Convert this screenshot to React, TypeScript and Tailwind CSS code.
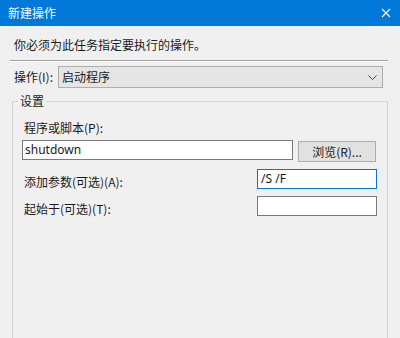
import React from 'react'

const font = { fontFamily: '"Noto Sans CJK SC", "Noto Sans", sans-serif' }

function CloseIcon() {
  return (
    <svg width="10" height="10" viewBox="0 0 10 10" className="block">
      <path d="M1 1 L9 9 M9 1 L1 9" stroke="#ffffff" strokeWidth="1.1" fill="none" />
    </svg>
  )
}

function Chevron() {
  return (
    <svg width="9" height="5" viewBox="0 0 9 5" className="block">
      <path d="M0.5 0.5 L4.5 4.5 L8.5 0.5" stroke="#444444" strokeWidth="1" fill="none" />
    </svg>
  )
}

export default function App() {
  return (
    <div
      className="w-[400px] h-[338px] overflow-hidden bg-[#f0f0f0] text-[12px] leading-[16px] text-[#1a1a1a]"
      style={font}
    >
      {/* Title bar */}
      <div className="flex h-[26px] items-center justify-between bg-[#0078d7] pl-[8px] pr-[9px] text-white">
        <span>新建操作</span>
        <CloseIcon />
      </div>

      <div className="px-[10px]">
        <p className="ml-[4px] mt-[11px]">你必须为此任务指定要执行的操作。</p>

        {/* Separator */}
        <div className="mt-[7px] w-[378px] border-t border-b border-t-[#a0a0a0] border-b-white" />

        {/* Action combo */}
        <div className="mt-[4px] flex items-center">
          <span className="ml-[4px] w-[44px]">操作(I):</span>
          <div className="flex h-[22px] w-[325px] items-center justify-between border border-[#adadad] bg-[#e5e5e5] pl-[3px] pr-[5px]">
            <span>启动程序</span>
            <Chevron />
          </div>
        </div>

        {/* Settings group */}
        <fieldset className="ml-[2px] mt-[5px] h-[260px] w-[376px] border border-[#d5d5d5] pl-[9px] pt-[11px]">
          <legend className="-ml-[4px] px-[2px]">设置</legend>
          <div className="ml-[2px]">程序或脚本(P):</div>
          <div className="mt-[4px] flex items-start gap-[5px]">
            <div className="flex h-[20px] w-[271px] items-center border border-[#7a7a7a] bg-white pl-[2px]">
              <span style={{ fontFamily: '"Noto Sans", sans-serif' }}>shutdown</span>
            </div>
            <button className="mt-[1px] h-[21px] w-[78px] border border-[#adadad] bg-[#e1e1e1] text-center">
              浏览(R)...
            </button>
          </div>

          <div className="mt-[7px] flex w-[355px] items-start justify-between">
            <span className="ml-[2px] pt-[5px]">添加参数(可选)(A):</span>
            <div className="flex h-[20px] w-[120px] items-center border border-[#0078d7] bg-white pl-[3px]">
              <span style={{ fontFamily: '"Noto Sans", sans-serif' }}>/S /F</span>
            </div>
          </div>

          <div className="mt-[6px] flex w-[355px] items-start justify-between">
            <span className="ml-[2px] pt-[5px]">起始于(可选)(T):</span>
            <div className="h-[20px] w-[120px] border border-[#7a7a7a] bg-white" />
          </div>
        </fieldset>
      </div>
    </div>
  )
}
